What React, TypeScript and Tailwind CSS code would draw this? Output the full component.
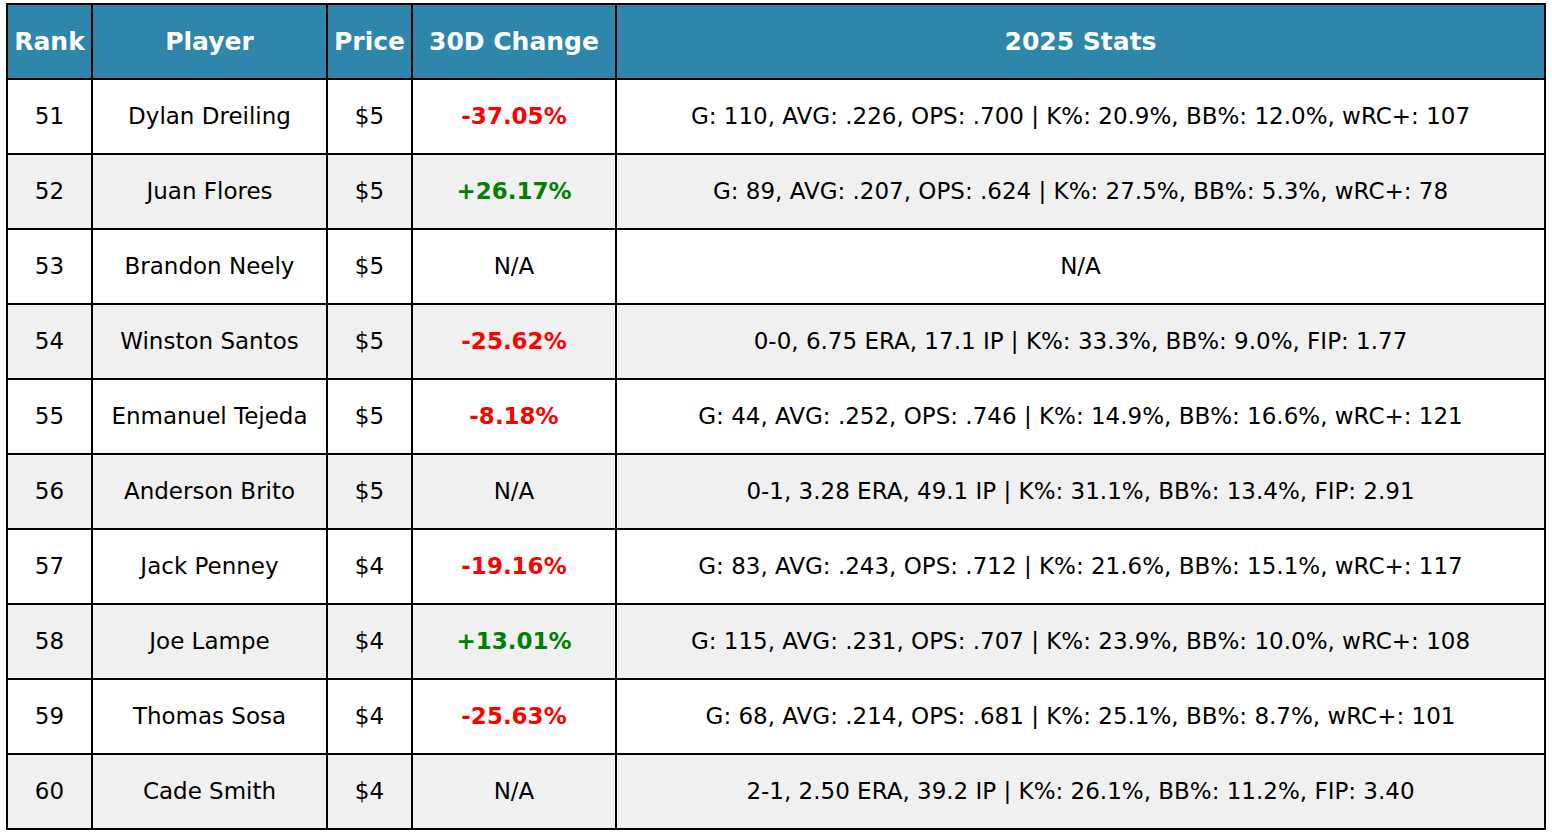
const ROWS = [
  { rank: 51, player: 'Dylan Dreiling', price: '$5', change: '-37.05%', stats: 'G: 110, AVG: .226, OPS: .700 | K%: 20.9%, BB%: 12.0%, wRC+: 107' },
  { rank: 52, player: 'Juan Flores', price: '$5', change: '+26.17%', stats: 'G: 89, AVG: .207, OPS: .624 | K%: 27.5%, BB%: 5.3%, wRC+: 78' },
  { rank: 53, player: 'Brandon Neely', price: '$5', change: 'N/A', stats: 'N/A' },
  { rank: 54, player: 'Winston Santos', price: '$5', change: '-25.62%', stats: '0-0, 6.75 ERA, 17.1 IP | K%: 33.3%, BB%: 9.0%, FIP: 1.77' },
  { rank: 55, player: 'Enmanuel Tejeda', price: '$5', change: '-8.18%', stats: 'G: 44, AVG: .252, OPS: .746 | K%: 14.9%, BB%: 16.6%, wRC+: 121' },
  { rank: 56, player: 'Anderson Brito', price: '$5', change: 'N/A', stats: '0-1, 3.28 ERA, 49.1 IP | K%: 31.1%, BB%: 13.4%, FIP: 2.91' },
  { rank: 57, player: 'Jack Penney', price: '$4', change: '-19.16%', stats: 'G: 83, AVG: .243, OPS: .712 | K%: 21.6%, BB%: 15.1%, wRC+: 117' },
  { rank: 58, player: 'Joe Lampe', price: '$4', change: '+13.01%', stats: 'G: 115, AVG: .231, OPS: .707 | K%: 23.9%, BB%: 10.0%, wRC+: 108' },
  { rank: 59, player: 'Thomas Sosa', price: '$4', change: '-25.63%', stats: 'G: 68, AVG: .214, OPS: .681 | K%: 25.1%, BB%: 8.7%, wRC+: 101' },
  { rank: 60, player: 'Cade Smith', price: '$4', change: 'N/A', stats: '2-1, 2.50 ERA, 39.2 IP | K%: 26.1%, BB%: 11.2%, FIP: 3.40' },
];

const HEADERS = ['Rank', 'Player', 'Price', '30D Change', '2025 Stats'];

function changeClass(c: string) {
  if (c.startsWith('-')) return 'text-[#ff0000] font-bold';
  if (c.startsWith('+')) return 'text-[#008000] font-bold';
  return 'text-black';
}

export default function App() {
  return (
    <div className="w-[1552px] h-[833px] bg-white pt-[3px] pl-[6px] font-['DejaVu_Sans',sans-serif] text-[23px] leading-none">
      <div className="w-[1540px] grid grid-cols-[83px_233px_83px_202px_927px] auto-rows-[73px] gap-[2px] p-[2px] bg-black">
        {HEADERS.map(h => (
          <div key={h} className="bg-[#2e86ab] text-white text-[25px] font-bold flex items-center justify-center whitespace-nowrap">
            {h}
          </div>
        ))}
        {ROWS.map((r, i) => {
          const bg = i % 2 === 1 ? 'bg-[#f0f0f0]' : 'bg-white';
          return [
            <div key={`${r.rank}-a`} className={`${bg} flex items-center justify-center text-black`}>{r.rank}</div>,
            <div key={`${r.rank}-b`} className={`${bg} flex items-center justify-center text-black whitespace-nowrap`}>{r.player}</div>,
            <div key={`${r.rank}-c`} className={`${bg} flex items-center justify-center text-black`}>{r.price}</div>,
            <div key={`${r.rank}-d`} className={`${bg} flex items-center justify-center ${changeClass(r.change)}`}>{r.change}</div>,
            <div key={`${r.rank}-e`} className={`${bg} flex items-center justify-center text-black whitespace-nowrap`}>{r.stats}</div>,
          ];
        })}
      </div>
    </div>
  );
}
